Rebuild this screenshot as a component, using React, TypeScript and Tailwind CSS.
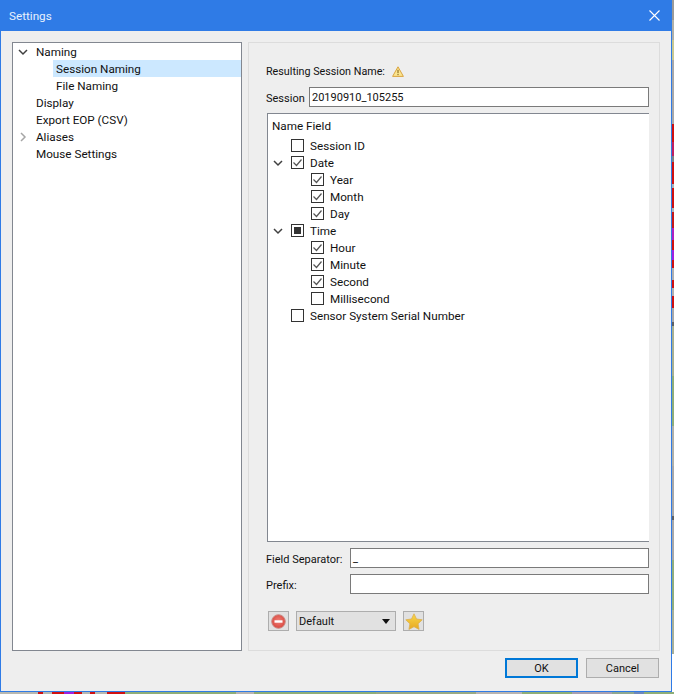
const font = "font-['Roboto',sans-serif]";

// bits of the map showing behind the dialog
const rightStrip = [
  "h-[20px] bg-[#9a9a9a]", "h-[20px] bg-[#b0b0a8]", "h-[20px] bg-[#c8c890]", "h-[64px] bg-[#a8a8a8]",
  "h-[18px] bg-[#d01010]", "h-[14px] bg-[#c02060]", "h-[6px] bg-[#808080]", "h-[22px] bg-[#d01010]",
  "h-[4px] bg-[#b0b0b0]", "h-[20px] bg-[#d01010]", "h-[4px] bg-[#b0b0b0]", "h-[16px] bg-[#c81818]",
  "h-[12px] bg-[#b020c0]", "h-[10px] bg-[#d01010]", "h-[10px] bg-[#a020e0]", "h-[8px] bg-[#d01010]",
  "h-[12px] bg-[#b0b0b0]", "h-[8px] bg-[#d01010]", "h-[8px] bg-[#b0b0b0]", "h-[12px] bg-[#d01010]",
  "h-[14px] bg-[#a8a8a8]", "h-[4px] bg-[#606060]", "h-[50px] bg-[#a8b090]", "h-[50px] bg-[#8fae78]",
  "h-[40px] bg-[#b0b0a8]", "h-[50px] bg-[#a8a8a8]", "h-[4px] bg-[#606060]", "h-[40px] bg-[#a8a8a8]",
  "h-[50px] bg-[#90ae7c]", "h-[44px] bg-[#a8b098]",
];
const bottomStrip = [
  "w-[38px] bg-[#b8b8b0]", "w-[5px] bg-[#d01010]", "w-[9px] bg-[#b8b8b0]", "w-[12px] bg-[#d01010]",
  "w-[10px] bg-[#a020e0]", "w-[8px] bg-[#d01010]", "w-[8px] bg-[#b8b8b0]", "w-[5px] bg-[#d01010]",
  "w-[12px] bg-[#b8b8b0]", "w-[18px] bg-[#d01010]", "w-[111px] bg-[#8fae78]", "w-[18px] bg-[#b8b4b0]",
  "w-[122px] bg-[#8fae78]", "w-[100px] bg-[#9aaa84]", "w-[46px] bg-[#b8b4b0]", "w-[50px] bg-[#8fae78]",
  "w-[40px] bg-[#a8a0b0]", "w-[22px] bg-[#8fa890]", "w-[10px] bg-[#7088b8]", "w-[30px] bg-[#8fae78]",
];

function Chevron({ open }: { open: boolean }) {
  return (
    <svg width="10" height="10" viewBox="0 0 10 10" className="shrink-0">
      {open ? (
        <path d="M1 3l4 4 4-4" fill="none" stroke="#404040" strokeWidth="1.5" />
      ) : (
        <path d="M3 1l4 4-4 4" fill="none" stroke="#a6a6a6" strokeWidth="1.5" />
      )}
    </svg>
  );
}

function TreeRow({ label, child, chevron, selected }: { label: string; child?: boolean; chevron?: "open" | "closed"; selected?: boolean }) {
  return (
    <div className="flex h-[17px] items-center">
      <div className="flex w-[23px] shrink-0 items-center pl-[5px]">{chevron && <Chevron open={chevron === "open"} />}</div>
      {child && <div className="w-[17px] shrink-0" />}
      <div className={`flex h-[17px] flex-1 items-center pt-[2px] ${child ? "pl-[3px]" : ""} ${selected ? "bg-[#cce8ff]" : ""}`}>{label}</div>
    </div>
  );
}

function Check({ state }: { state: "on" | "off" | "mixed" }) {
  return (
    <div className="flex h-[13px] w-[13px] shrink-0 items-center justify-center border border-[#333333] bg-white">
      {state === "on" && (
        <svg width="11" height="11" viewBox="0 0 11 11">
          <path d="M1.5 5.5l3 3 5-6" fill="none" stroke="#555555" strokeWidth="1.2" />
        </svg>
      )}
      {state === "mixed" && <div className="h-[7px] w-[7px] bg-[#333333]" />}
    </div>
  );
}

function FieldRow({ label, state, sub, open }: { label: string; state: "on" | "off" | "mixed"; sub?: boolean; open?: boolean }) {
  return (
    <div className={`flex h-[17px] items-center ${sub ? "pl-[43px]" : "pl-[5px]"}`}>
      {!sub && <div className="flex w-[18px] shrink-0 items-center">{open && <Chevron open />}</div>}
      <Check state={state} />
      <span className="ml-[6px] pt-[2px]">{label}</span>
    </div>
  );
}

function TextBox({ value, className }: { value: string; className?: string }) {
  return <div className={`flex h-[20px] items-center border border-[#7a7a7a] bg-white pl-[2px] text-[11px] ${className ?? ""}`}>{value}</div>;
}

export default function App() {
  return (
    <div className={`flex h-[694px] w-[674px] flex-col overflow-hidden text-[11.7px] leading-none text-[#111111] ${font}`}>
      <div className="flex h-[692px] shrink-0">
        <div className="flex h-[692px] w-[672px] shrink-0 flex-col border-x border-b border-[#2f7be6] bg-[#eeeeee]">
          <div className="flex h-[31px] shrink-0 items-center justify-between bg-[#2f7be6] pl-[8px] pr-[11px] text-[#e8f1fd]">
            <span className="pt-[2px]">Settings</span>
            <svg width="11" height="11" viewBox="0 0 11 11">
              <path d="M.5.5l10 10M10.5.5l-10 10" stroke="white" strokeWidth="1.1" />
            </svg>
          </div>

          <div className="flex flex-1 gap-[6px] pl-[11px] pr-[11px] pt-[11px]">
            <div className="h-[609px] w-[230px] shrink-0 border border-[#828790] bg-white">
              <TreeRow label="Naming" chevron="open" />
              <TreeRow label="Session Naming" child selected />
              <TreeRow label="File Naming" child />
              <TreeRow label="Display" />
              <TreeRow label="Export EOP (CSV)" />
              <TreeRow label="Aliases" chevron="closed" />
              <TreeRow label="Mouse Settings" />
            </div>

            <div className="flex h-[609px] w-[412px] flex-col border border-[#dcdcdc] pl-[18px] pr-[10px]">
              <div className="flex h-[38px] items-end pb-[1px]">
                <div className="flex h-[17px] items-center gap-[7px] text-[10.75px]">
                  <span className="-ml-[1px] pt-[2px]">Resulting Session Name:</span>
                  <svg width="12" height="11" viewBox="0 0 12 11">
                    <path d="M6 .8L11.4 10.4H.6z" fill="#fbe58f" stroke="#d9a441" />
                    <path d="M6 3.8v3.4M6 8v1.2" stroke="#7a5a10" strokeWidth="1" />
                  </svg>
                </div>
              </div>
              <div className="mt-[6px] flex items-center text-[11px]">
                <span className="-ml-[1px] w-[43px] shrink-0 pt-[2px]">Session</span>
                <TextBox value="20190910_105255" className="flex-1" />
              </div>
              <div className="mt-[6px] h-[429px] border-b border-l border-t border-[#828790] bg-white">
                <div className="flex h-[19px] items-end pl-[4px]">Name Field</div>
                <div className="pt-[4px]">
                  <FieldRow label="Session ID" state="off" />
                  <FieldRow label="Date" state="on" open />
                  <FieldRow label="Year" state="on" sub />
                  <FieldRow label="Month" state="on" sub />
                  <FieldRow label="Day" state="on" sub />
                  <FieldRow label="Time" state="mixed" open />
                  <FieldRow label="Hour" state="on" sub />
                  <FieldRow label="Minute" state="on" sub />
                  <FieldRow label="Second" state="on" sub />
                  <FieldRow label="Millisecond" state="off" sub />
                  <FieldRow label="Sensor System Serial Number" state="off" />
                </div>
              </div>
              <div className="mt-[6px] flex items-center text-[11px]">
                <span className="-ml-[1px] w-[84px] shrink-0 whitespace-nowrap pt-[2px]">Field Separator:</span>
                <TextBox value="_" className="flex-1" />
              </div>
              <div className="mt-[6px] flex items-center text-[11px]">
                <span className="-ml-[1px] w-[84px] shrink-0 pt-[2px]">Prefix:</span>
                <TextBox value="" className="flex-1" />
              </div>
              <div className="mt-[17px] flex items-center gap-[7px] pl-[1px]">
                <div className="flex h-[20px] w-[21px] items-center justify-center border border-[#adadad] bg-[#e1e1e1]">
                  <svg width="15" height="15" viewBox="0 0 15 15">
                    <defs>
                      <radialGradient id="stopFill" cx="50%" cy="45%" r="55%">
                        <stop offset="0%" stopColor="#ef8078" />
                        <stop offset="100%" stopColor="#d9483f" />
                      </radialGradient>
                    </defs>
                    <circle cx="7.5" cy="7.5" r="6.8" fill="url(#stopFill)" stroke="#c98a85" />
                    <rect x="3.5" y="6.3" width="8" height="2.4" fill="white" />
                  </svg>
                </div>
                <div className="flex h-[20px] w-[100px] items-center justify-between border border-[#adadad] bg-[#e1e1e1] pl-[2px] pr-[5px] text-[11px]">
                  <span className="pt-[1px]">Default</span>
                  <svg width="8" height="5" viewBox="0 0 8 5">
                    <path d="M0 0h8L4 5z" fill="#111111" />
                  </svg>
                </div>
                <div className="flex h-[20px] w-[21px] items-center justify-center border border-[#adadad] bg-[#e1e1e1]">
                  <svg width="18" height="17" viewBox="0 0 18 17">
                    <defs>
                      <linearGradient id="starFill" x1="0" y1="0" x2="0" y2="1">
                        <stop offset="0%" stopColor="#f8d84a" />
                        <stop offset="100%" stopColor="#e8a820" />
                      </linearGradient>
                    </defs>
                    <path d="M9 .8l2.5 5.2 5.7.8-4.1 4 1 5.6L9 13.7l-5.1 2.7 1-5.6-4.1-4 5.7-.8z" fill="url(#starFill)" stroke="#dcb050" strokeWidth=".8" />
                  </svg>
                </div>
              </div>
            </div>
          </div>

          <div className="flex h-[40px] shrink-0 justify-end gap-[8px] pr-[12px] pt-[7px] text-[11px]">
            <div className="flex h-[20px] w-[73px] items-center justify-center border-2 border-[#0078d7] bg-[#e1e1e1] pt-[1px]">OK</div>
            <div className="flex h-[20px] w-[73px] items-center justify-center border border-[#adadad] bg-[#e1e1e1] pt-[1px]">Cancel</div>
          </div>
        </div>
        <div className="flex w-[2px] flex-col">
          {rightStrip.map((c, i) => (
            <div key={i} className={`shrink-0 ${c}`} />
          ))}
        </div>
      </div>
      <div className="flex h-[2px] shrink-0">
        {bottomStrip.map((c, i) => (
          <div key={i} className={`shrink-0 ${c}`} />
        ))}
      </div>
    </div>
  );
}
